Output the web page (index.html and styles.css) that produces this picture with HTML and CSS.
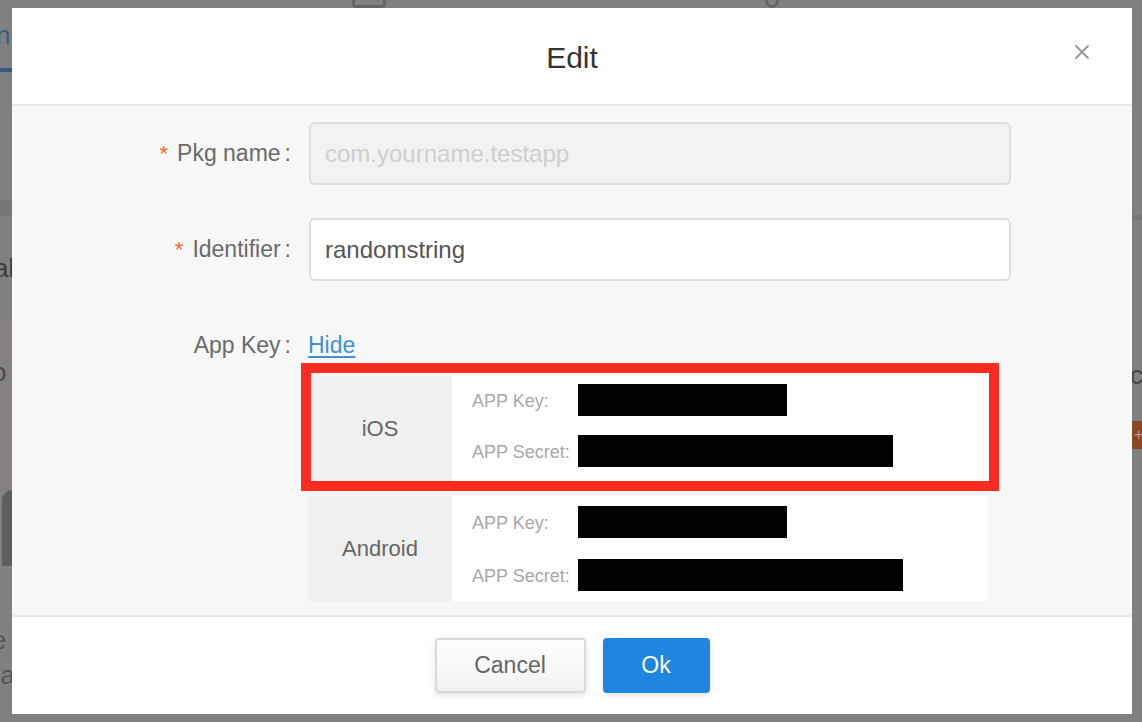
FILE: index.html
```html
<!DOCTYPE html>
<html lang="en">
<head>
<meta charset="utf-8">
<title>Edit</title>
<link rel="stylesheet" href="styles.css">
</head>
<body>
<div class="backdrop">
  <div class="bg-tab">nc</div>
  <div class="bg-tabline"></div>
  <div class="bg-icon bg-icon-a"></div>
  <div class="bg-icon bg-icon-b"></div>
  <div class="bg-band"></div>
  <div class="bg-text bg-t1">al</div>
  <div class="bg-warm"></div>
  <div class="bg-text bg-t2">o</div>
  <div class="bg-shape"></div>
  <div class="bg-text bg-t3">e</div>
  <div class="bg-text bg-t4">na</div>
  <div class="bg-right-band"></div>
  <div class="bg-text bg-t5">c</div>
  <div class="bg-plus">+</div>
</div>

<div class="modal">
  <div class="modal-header">
    <h1 class="modal-title">Edit</h1>
    <button class="modal-close" aria-label="Close">
      <svg width="16" height="16" viewBox="0 0 16 16"><path d="M1.5 1.5 L14.5 14.5 M14.5 1.5 L1.5 14.5" stroke="#9a9a9a" stroke-width="2" fill="none"/></svg>
    </button>
  </div>

  <div class="modal-body">
    <div class="form-row">
      <label class="form-label"><span class="req">*</span>Pkg name<span class="colon">:</span></label>
      <div class="input input-disabled">com.yourname.testapp</div>
    </div>
    <div class="form-row row-identifier">
      <label class="form-label"><span class="req">*</span>Identifier<span class="colon">:</span></label>
      <div class="input">randomstring</div>
    </div>
    <div class="form-row row-appkey">
      <label class="form-label label-top">App Key<span class="colon">:</span></label>
      <div class="appkey-col">
        <a class="hide-link" href="#">Hide</a>
        <div class="key-table">
          <div class="key-row key-row-ios">
            <div class="platform">iOS</div>
            <div class="key-fields">
              <div class="key-line"><span class="key-label">APP Key:</span><span class="redact" style="width:209px"></span></div>
              <div class="key-line"><span class="key-label">APP Secret:</span><span class="redact" style="width:315px"></span></div>
            </div>
            <div class="highlight"></div>
          </div>
          <div class="key-row key-row-android">
            <div class="platform">Android</div>
            <div class="key-fields">
              <div class="key-line"><span class="key-label">APP Key:</span><span class="redact" style="width:209px"></span></div>
              <div class="key-line"><span class="key-label">APP Secret:</span><span class="redact" style="width:325px"></span></div>
            </div>
          </div>
        </div>
      </div>
    </div>
  </div>

  <div class="modal-footer">
    <button class="btn btn-cancel">Cancel</button>
    <button class="btn btn-ok">Ok</button>
  </div>
</div>
</body>
</html>
```

FILE: styles.css
```css
* { box-sizing: border-box; }

html, body {
  margin: 0;
  padding: 0;
  width: 1142px;
  height: 722px;
  overflow: hidden;
  font-family: "Liberation Sans", Arial, sans-serif;
}

body { background: #7f7f7f; position: relative; }

/* dimmed page behind the dialog */
.backdrop {
  position: absolute;
  inset: 0;
  background: #808080;
}
.bg-tab {
  position: absolute; left: -4px; top: 20px;
  font-size: 26px; color: #3a5c80;
}
.bg-tabline {
  position: absolute; left: 0; top: 68px; width: 14px; height: 4px;
  background: #2e5984;
}
.bg-icon {
  position: absolute; top: -6px; width: 34px; height: 14px;
  border: 3px solid #666; border-radius: 4px;
}
.bg-icon-a { left: 352px; }
.bg-icon-b { left: 765px; width: 14px; border-radius: 0 0 8px 8px; }
.bg-band {
  position: absolute; left: 0; top: 200px; width: 14px; height: 16px;
  background: #777;
}
.bg-warm {
  position: absolute; left: 0; top: 318px; width: 14px; height: 250px;
  background: #858181;
}
.bg-shape {
  position: absolute; left: 2px; top: 490px; width: 14px; height: 76px;
  background: #5e5e5e; border-radius: 10px 0 0 0;
}
.bg-text { position: absolute; font-size: 26px; color: #3c3c3c; }
.bg-t1 { left: -6px; top: 253px; }
.bg-t2 { left: -8px; top: 357px; color: #4a4a4a; }
.bg-t3 { left: -8px; top: 625px; color: #555; }
.bg-t4 { left: -14px; top: 660px; color: #555; }
.bg-right-band {
  position: absolute; right: 0; top: 215px; width: 14px; height: 5px; background: #777;
}
.bg-t5 { left: 1130px; top: 360px; color: #444; }
.bg-plus {
  position: absolute; left: 1132px; top: 421px; width: 14px; height: 28px;
  background: #8b4623; color: #b99; font-size: 16px; line-height: 28px; padding-left: 2px;
}

/* dialog */
.modal {
  position: absolute;
  left: 12px;
  top: 8px;
  width: 1120px;
  height: 706px;
  background: #fff;
  display: flex;
  flex-direction: column;
}

.modal-header {
  position: relative;
  height: 98px;
  flex: none;
  border-bottom: 2px solid #e8e8e8;
  display: flex;
  align-items: center;
  justify-content: center;
}
.modal-title {
  margin: 0;
  font-size: 30px;
  font-weight: normal;
  color: #333;
  padding-top: 4px;
}
.modal-close {
  position: absolute;
  right: 42px;
  top: 36px;
  width: 16px;
  height: 16px;
  padding: 0;
  border: 0;
  background: none;
  display: flex;
}

.modal-body {
  flex: 1;
  background: #f7f7f7;
  padding-top: 16px;
}

.form-row {
  display: grid;
  grid-template-columns: 279px 702px;
  column-gap: 18px;
  align-items: center;
}
.row-identifier { margin-top: 33px; }
.row-appkey { margin-top: 47px; align-items: start; }

.form-label {
  text-align: right;
  font-size: 23px;
  color: #6a6a6a;
  white-space: nowrap;
}
.label-top { line-height: 34px; }
.req {
  color: #ff6a1a;
  font-size: 22px;
  margin-right: 9px;
}
.colon { margin-left: 4px; }

.input {
  height: 63px;
  border: 2px solid #dedede;
  border-radius: 6px;
  background: #fff;
  font-size: 24px;
  color: #555;
  padding-left: 14px;
  display: flex;
  align-items: center;
}
.input-disabled {
  background: #f2f2f2;
  color: #cfcfcf;
}

.appkey-col {
  display: flex;
  flex-direction: column;
  margin-left: -1px;
}
.hide-link {
  font-size: 23px;
  line-height: 34px;
  color: #3d90dd;
  text-decoration: underline;
  text-underline-offset: 3px;
  align-self: flex-start;
}

.key-table {
  margin-top: 14px;
  width: 680px;
  display: flex;
  flex-direction: column;
  gap: 15px;
}
.key-row {
  position: relative;
  height: 105px;
  display: flex;
  background: #fff;
}
.platform {
  width: 144px;
  flex: none;
  background: #f0f0f0;
  display: flex;
  align-items: center;
  justify-content: center;
  font-size: 22px;
  color: #666;
}
.key-fields {
  display: flex;
  flex-direction: column;
  gap: 19px;
  padding: 8px 0 0 20px;
}
.key-row-android .key-fields { padding-top: 10px; gap: 21px; }
.key-line {
  display: flex;
  align-items: center;
  height: 32px;
}
.key-label {
  width: 106px;
  flex: none;
  font-size: 18px;
  color: #a8a8a8;
  padding-top: 3px;
}
.redact {
  display: block;
  height: 32px;
  background: #000;
}

.highlight {
  position: absolute;
  left: -7px;
  top: -13px;
  right: -11px;
  bottom: -10px;
  border: 10px solid #fd2a20;
  pointer-events: none;
}

.modal-footer {
  height: 99px;
  flex: none;
  border-top: 2px solid #e8e8e8;
  display: flex;
  justify-content: center;
  align-items: flex-start;
  gap: 17px;
  padding-top: 21px;
}
.btn {
  height: 55px;
  border-radius: 4px;
  font-family: inherit;
  font-size: 23px;
  cursor: pointer;
}
.btn-cancel {
  width: 151px;
  border: 2px solid #d9d9d9;
  background: linear-gradient(#ffffff, #f1f1f1);
  color: #666;
  box-shadow: 0 2px 6px rgba(0, 0, 0, 0.12);
}
.btn-ok {
  width: 107px;
  border: 0;
  background: #1f86e0;
  color: #fff;
  box-shadow: 0 2px 6px rgba(0, 0, 0, 0.12);
}
```
